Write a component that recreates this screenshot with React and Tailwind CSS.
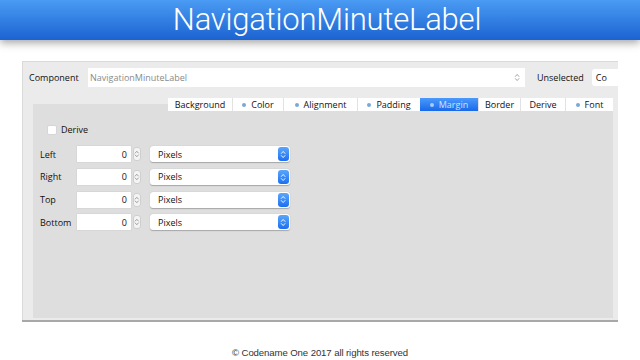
import { useState } from 'react';

const tabs = [
  { name: 'Background', w: 64, dot: false },
  { name: 'Color', w: 51, dot: true },
  { name: 'Alignment', w: 74, dot: true },
  { name: 'Padding', w: 63, dot: true },
  { name: 'Margin', w: 58, dot: true },
  { name: 'Border', w: 42, dot: false },
  { name: 'Derive', w: 45, dot: false },
  { name: 'Font', w: 48, dot: true },
];

const sides = ['Left', 'Right', 'Top', 'Bottom'];

function Chevrons({ color = '#8a8a8a', size = 8 }) {
  return (
    <svg width={size * 0.7} height={size} viewBox="0 0 7 10" fill="none">
      <path d="M1.5 3.8 L3.5 1.6 L5.5 3.8" stroke={color} strokeWidth="1" strokeLinecap="round" strokeLinejoin="round" />
      <path d="M1.5 6.2 L3.5 8.4 L5.5 6.2" stroke={color} strokeWidth="1" strokeLinecap="round" strokeLinejoin="round" />
    </svg>
  );
}

function SideRow({ label }) {
  const [unit] = useState('Pixels');
  return (
    <div className="flex items-center h-[22.7px]">
      <span className="w-[44px] pl-[7px]">{label}</span>
      <div className="w-[54px] h-[16px] bg-white flex items-center justify-end pr-[4px] shadow-[0_0_0_0.5px_#d0d0d0]">0</div>
      <div className="ml-[2px] w-[8px] h-[14px] rounded-[3px] bg-[#f4f4f4] border border-[#cfcfcf] flex items-center justify-center">
        <Chevrons size={8} />
      </div>
      <div className="ml-[9px] w-[140px] h-[16px] bg-white rounded-[3px] flex items-center justify-between pl-[8px] pr-[1px] shadow-[0_0.5px_1px_rgba(0,0,0,0.25)]">
        <span>{unit}</span>
        <div className="w-[11px] h-[14px] rounded-[3px] bg-gradient-to-b from-[#5aa6fb] to-[#1a6ff0] flex items-center justify-center">
          <Chevrons color="#ffffff" size={9} />
        </div>
      </div>
    </div>
  );
}

export default function App() {
  return (
    <div className="w-[640px] h-[360px] bg-white overflow-hidden flex flex-col">
      <header className="relative h-[40px] shrink-0 bg-gradient-to-b from-[#4a9bf3] to-[#1c63d2] flex items-center justify-center shadow-[0_3px_8px_rgba(0,0,0,0.35)]">
        <h1 className="text-white text-[31px] font-light leading-none tracking-[-0.2px] -mt-[2px] ml-[14px]" style={{ fontFamily: 'Roboto, "Helvetica Neue", sans-serif' }}>
          NavigationMinuteLabel
        </h1>
      </header>

      <div
        className="mt-[21px] ml-[22px] w-[596px] h-[262px] bg-[#ebebeb] border-l border-t border-[#dadada] flex flex-col overflow-hidden text-[9px] text-[#111] shadow-[0_2px_0_#a8a8a8]"
        style={{ fontFamily: '"Open Sans", "DejaVu Sans", sans-serif' }}
      >
        <div className="flex items-center mt-[6px] h-[19px]">
          <span className="pl-[6px] w-[65px]">Component</span>
          <div className="w-[437px] h-[19px] bg-white flex items-center justify-between pl-[2px] pr-[5px] text-[#8a8a8a]">
            <span>NavigationMinuteLabel</span>
            <Chevrons color="#9a9a9a" size={9} />
          </div>
          <span className="ml-[12px]">Unselected</span>
          <div className="ml-[8px] flex-1 h-[17px] bg-white rounded-l-[3px] flex items-center pl-[4px]">Co</div>
        </div>

        <div className="mt-[17px] ml-[10px] w-[580px] h-[214px] bg-[#dedede] flex flex-col">
          <div className="-mt-[6px] self-end flex h-[13px] bg-white">
            {tabs.map((t, i) => {
              const sel = t.name === 'Margin';
              return (
                <div
                  key={t.name}
                  style={{ width: t.w }}
                  className={
                    sel
                      ? 'flex items-center justify-center gap-[5px] bg-gradient-to-b from-[#4b99fb] to-[#1769ea] text-[#cfe2ff]'
                      : `flex items-center justify-center gap-[5px] ${i > 0 ? 'border-l border-[#e2e2e2]' : ''}`
                  }
                >
                  {t.dot && <span className={sel ? 'w-[4px] h-[4px] rounded-full bg-[#a9cbf5]' : 'w-[4px] h-[4px] rounded-full bg-[#7aa9d6]'} />}
                  <span>{t.name}</span>
                </div>
              );
            })}
          </div>

          <div className="flex items-center mt-[14px] pl-[14px] h-[10px]">
            <div className="w-[10px] h-[10px] bg-white rounded-[2px] border border-[#d6d6d6]" />
            <span className="ml-[4px]">Derive</span>
          </div>

          <div className="mt-[8px] flex flex-col">
            {sides.map((s) => (
              <SideRow key={s} label={s} />
            ))}
          </div>
        </div>
      </div>

      <footer className="mt-[26px] text-center text-[9.6px] text-[#333] tracking-[-0.1px]" style={{ fontFamily: '"Liberation Sans", Arial, sans-serif' }}>
        © Codename One 2017 all rights reserved
      </footer>
    </div>
  );
}
